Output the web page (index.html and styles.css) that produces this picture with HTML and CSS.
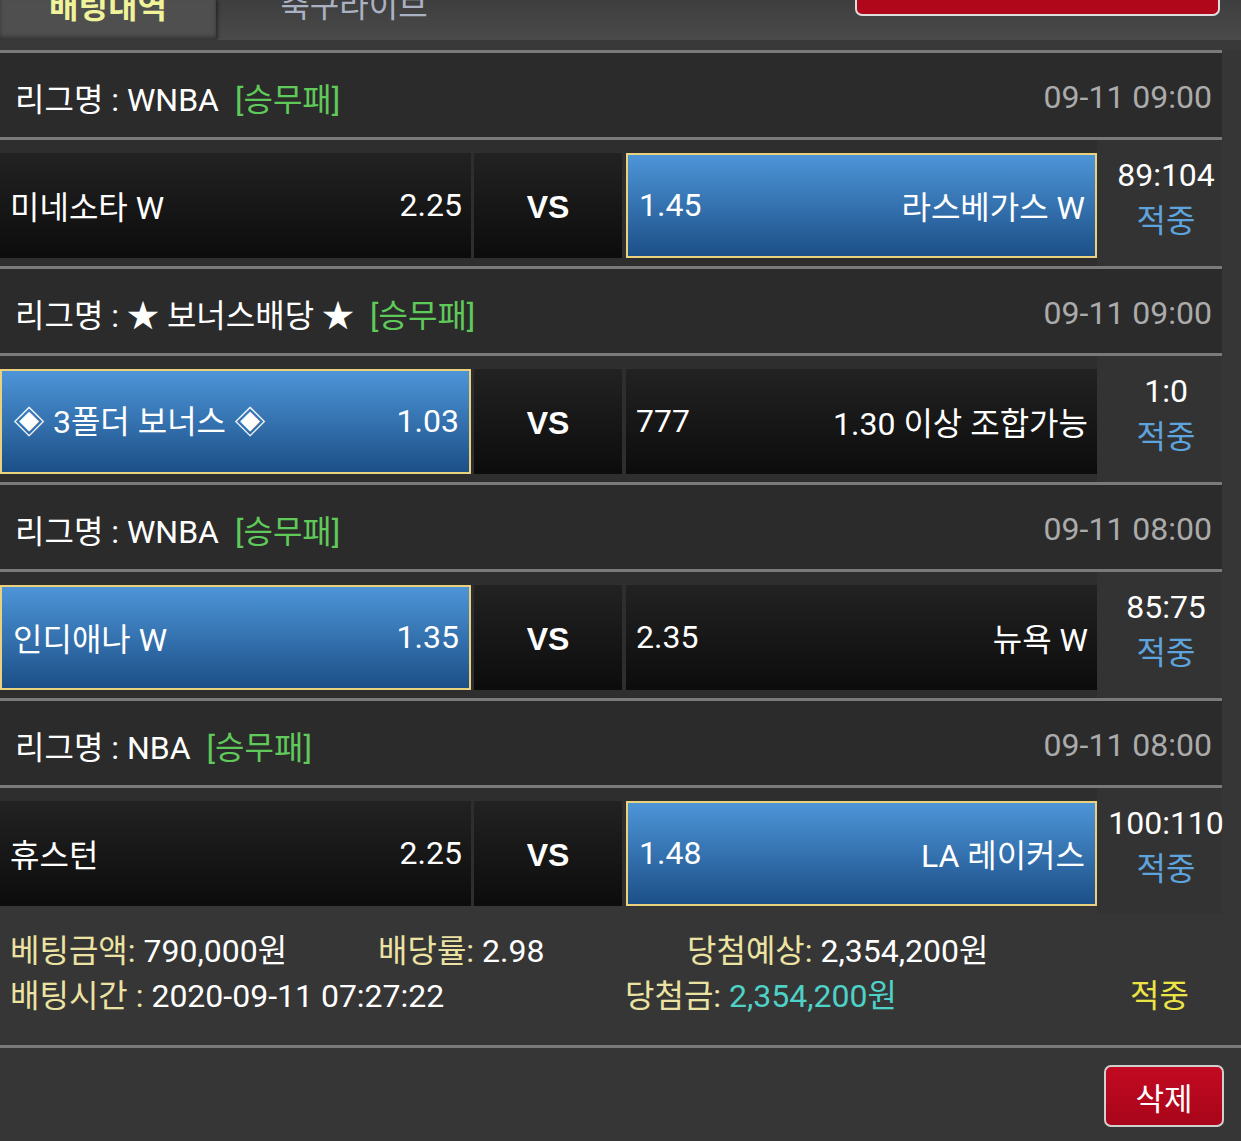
FILE: index.html
```html
<!DOCTYPE html>
<html lang="ko">
<head>
    <meta charset="UTF-8">
    <meta name="viewport" content="width=device-width, initial-scale=1.0">
    <title>배팅내역</title>
    <link rel="stylesheet" href="styles.css">
</head>
<body>
    <div class="topbar">
        <div class="tab active">배팅내역</div>
        <div class="tab">축구라이브</div>
        <div class="top-btn"></div>
    </div>

    <div class="bet-list">
        <div class="game">
            <div class="league">
                <span class="league-name">리그명 : WNBA</span>
                <span class="league-type">[승무패]</span>
                <span class="league-date">09-11 09:00</span>
            </div>
            <div class="match">
                <div class="team"><span>미네소타 W</span><span>2.25</span></div>
                <div class="vs">VS</div>
                <div class="team picked"><span>1.45</span><span>라스베가스 W</span></div>
                <div class="result"><div class="score">89:104</div><div class="hit">적중</div></div>
            </div>
        </div>

        <div class="game">
            <div class="league">
                <span class="league-name">리그명 : ★ 보너스배당 ★</span>
                <span class="league-type">[승무패]</span>
                <span class="league-date">09-11 09:00</span>
            </div>
            <div class="match">
                <div class="team picked"><span>◈ 3폴더 보너스 ◈</span><span>1.03</span></div>
                <div class="vs">VS</div>
                <div class="team"><span>777</span><span>1.30 이상 조합가능</span></div>
                <div class="result"><div class="score">1:0</div><div class="hit">적중</div></div>
            </div>
        </div>

        <div class="game">
            <div class="league">
                <span class="league-name">리그명 : WNBA</span>
                <span class="league-type">[승무패]</span>
                <span class="league-date">09-11 08:00</span>
            </div>
            <div class="match">
                <div class="team picked"><span>인디애나 W</span><span>1.35</span></div>
                <div class="vs">VS</div>
                <div class="team"><span>2.35</span><span>뉴욕 W</span></div>
                <div class="result"><div class="score">85:75</div><div class="hit">적중</div></div>
            </div>
        </div>

        <div class="game">
            <div class="league">
                <span class="league-name">리그명 : NBA</span>
                <span class="league-type">[승무패]</span>
                <span class="league-date">09-11 08:00</span>
            </div>
            <div class="match">
                <div class="team"><span>휴스턴</span><span>2.25</span></div>
                <div class="vs">VS</div>
                <div class="team picked"><span>1.48</span><span>LA 레이커스</span></div>
                <div class="result"><div class="score">100:110</div><div class="hit">적중</div></div>
            </div>
        </div>
    </div>

    <div class="summary">
        <div class="sum-row">
            <div class="c1"><span class="label">베팅금액:</span> 790,000원</div>
            <div class="c2"><span class="label">배당률:</span> 2.98</div>
            <div class="c3"><span class="label">당첨예상:</span> 2,354,200원</div>
        </div>
        <div class="sum-row">
            <div class="c4"><span class="label">배팅시간 :</span> 2020-09-11 07:27:22</div>
            <div class="c5"><span class="label">당첨금:</span> <span class="win">2,354,200원</span></div>
            <div class="c6">적중</div>
        </div>
    </div>

    <div class="actions">
        <button class="delete">삭제</button>
    </div>
</body>
</html>
```

FILE: styles.css
```css
:root {
    --bg: #363636;
    --row: #2b2b2b;
    --line: #7a7a7a;
    --label: #ece3a2;
    --hit: #5ea3dc;
}

body {
    margin: 0;
    background: var(--bg);
    color: #fff;
    font-family: Roboto, "Noto Sans CJK KR", sans-serif;
    font-size: 32px;
    overflow: hidden;
}

/* top tabs */
.topbar {
    height: 40px;
    display: flex;
    background: linear-gradient(#3e3e3e, #4a4a4a);
    border-bottom: 10px solid #393939;
    overflow: hidden;
}

.tab {
    width: 216px;
    text-align: center;
    font-size: 32px;
    line-height: 32px;
    margin-top: -10px;
    color: #a9b1c2;
}

.tab.active {
    background: #4f4f4f;
    color: #eff39a;
    font-weight: 700;
    margin-top: 0;
    line-height: 14px;
    box-shadow: inset 0 -3px 4px rgba(0, 0, 0, 0.35), 2px 0 3px rgba(0, 0, 0, 0.4);
}

.tab:nth-child(2) {
    width: 276px;
}

.top-btn {
    margin-left: auto;
    margin-right: 21px;
    width: 361px;
    height: 14px;
    background: #b0071b;
    border: 2px solid #ddd;
    border-top: none;
    border-radius: 0 0 7px 7px;
}

/* games */
.bet-list {
    width: 1222px;
}

.league {
    display: flex;
    align-items: center;
    padding: 4px 10px 0 15px;
    box-sizing: border-box;
    background: var(--row);
    border-top: 3px solid var(--line);
    border-bottom: 3px solid var(--line);
    height: 90px;
    font-size: 32px;
}

.league-type {
    color: #5fc95a;
    margin-left: 16px;
}

.league-date {
    margin-left: auto;
    color: #ababab;
    font-size: 32px;
}

.match {
    display: flex;
    background: #2e2e2e;
    padding: 13px 0 8px;
    height: 105px;
}

.game:last-child .match {
    padding-bottom: 0;
}

.game:last-child {
    padding-bottom: 8px;
}

.team {
    flex: 0 0 471px;
    box-sizing: border-box;
    display: flex;
    justify-content: space-between;
    align-items: center;
    padding: 0 9px 2px 10px;
    background: linear-gradient(#222, #0c0c0c);
}

.team + .vs {
    margin-left: 3px;
}

.team.picked {
    background: linear-gradient(#4d95d8, #1c4f87);
    border: 2px solid #ead17e;
    padding: 0 10px 2px 11px;
}

.vs {
    flex: 0 0 148px;
    display: flex;
    align-items: center;
    justify-content: center;
    padding-top: 3px;
    margin-right: 4px;
    background: linear-gradient(#222, #0c0c0c);
    font-family: "Liberation Sans", sans-serif;
    font-weight: 700;
    font-size: 32px;
}

.result {
    flex: 1;
    min-width: 0;
    display: flex;
    flex-direction: column;
    align-items: center;
    justify-content: center;
    background: #333;
    margin-top: -13px;
    margin-bottom: -8px;
    padding: 0 0 10px 13px;
    line-height: 46px;
    white-space: nowrap;
}

.hit {
    color: var(--hit);
}

/* summary */
.summary {
    padding: 11px 0 30px 10px;
    border-bottom: 3px solid var(--line);
    font-size: 32px;
}

.sum-row {
    display: flex;
    height: 45px;
    align-items: center;
}

.label {
    color: var(--label);
}

.c1 { width: 368px; }
.c2 { width: 309px; }
.c4 { width: 615px; }
.c5 { width: 505px; }
.c6 { color: #ebe444; }

.win {
    color: #4ed1c6;
}

.actions {
    display: flex;
    justify-content: flex-end;
    padding: 17px 17px 0 0;
}

.delete {
    width: 120px;
    height: 62px;
    background: linear-gradient(#c20a22, #a8051a);
    color: #fff;
    border: 2px solid #cfcfcf;
    border-radius: 7px;
    font-family: Roboto, "Noto Sans CJK KR", sans-serif;
    font-size: 31px;
    cursor: pointer;
}
```
